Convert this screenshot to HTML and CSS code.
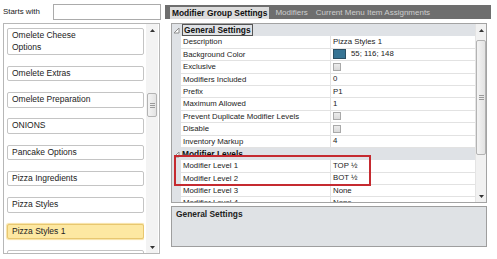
FILE: index.html
```html
<!DOCTYPE html>
<html>
<head>
<meta charset="utf-8">
<link rel="stylesheet" href="styles.css">
</head>
<body>
<div class="app">
  <aside class="left">
    <div class="search">
      <span class="search-label">Starts with</span>
      <input class="search-input" type="text">
    </div>
    <div class="list">
      <div class="items">
        <div class="item">Omelete Cheese<br>Options</div>
        <div class="item">Omelete Extras</div>
        <div class="item">Omelete Preparation</div>
        <div class="item">ONIONS</div>
        <div class="item">Pancake Options</div>
        <div class="item">Pizza Ingredients</div>
        <div class="item">Pizza Styles</div>
        <div class="item selected">Pizza Styles 1</div>
        <div class="item">&nbsp;</div>
      </div>
      <div class="lscroll">
        <div class="arrow"><svg width="5" height="3" viewBox="0 0 5 3"><polygon points="0,3 5,3 2.5,0" fill="#333"/></svg></div>
        <div class="lthumb"><span class="grip"></span></div>
        <div class="arrow down"><svg width="5" height="3" viewBox="0 0 5 3"><polygon points="0,0 5,0 2.5,3" fill="#333"/></svg></div>
      </div>
    </div>
  </aside>
  <main class="right">
    <div class="tabs">
      <span class="tab active">Modifier Group Settings</span>
      <span class="tab">Modifiers</span>
      <span class="tab">Current Menu Item Assignments</span>
    </div>
    <div class="grid">
      <div class="rows">
        <div class="row cat"><span class="gut"><svg width="7" height="7" viewBox="0 0 7 7"><polygon points="6,1 6,6 1,6" fill="#fff" stroke="#8c8c8c" stroke-width="1"/></svg></span><span class="cat-label"><span class="focus">General Settings</span></span></div>
        <div class="row"><span class="gut"></span><span class="name">Description</span><span class="val">Pizza Styles 1</span></div>
        <div class="row"><span class="gut"></span><span class="name">Background Color</span><span class="val"><span class="swatch"></span>55; 116; 148</span></div>
        <div class="row"><span class="gut"></span><span class="name">Exclusive</span><span class="val"><span class="check"></span></span></div>
        <div class="row"><span class="gut"></span><span class="name">Modifiers Included</span><span class="val">0</span></div>
        <div class="row"><span class="gut"></span><span class="name">Prefix</span><span class="val">P1</span></div>
        <div class="row"><span class="gut"></span><span class="name">Maximum Allowed</span><span class="val">1</span></div>
        <div class="row"><span class="gut"></span><span class="name">Prevent Duplicate Modifier Levels</span><span class="val"><span class="check"></span></span></div>
        <div class="row"><span class="gut"></span><span class="name">Disable</span><span class="val"><span class="check"></span></span></div>
        <div class="row"><span class="gut"></span><span class="name">Inventory Markup</span><span class="val">4</span></div>
        <div class="row cat"><span class="gut"><svg width="7" height="7" viewBox="0 0 7 7"><polygon points="6,1 6,6 1,6" fill="#fff" stroke="#8c8c8c" stroke-width="1"/></svg></span><span class="cat-label">Modifier Levels</span></div>
        <div class="row"><span class="gut"></span><span class="name">Modifier Level 1</span><span class="val">TOP ½</span></div>
        <div class="row"><span class="gut"></span><span class="name">Modifier Level 2</span><span class="val">BOT ½</span></div>
        <div class="row"><span class="gut"></span><span class="name">Modifier Level 3</span><span class="val">None</span></div>
        <div class="row"><span class="gut"></span><span class="name">Modifier Level 4</span><span class="val">None</span></div>
      </div>
      <div class="gscroll">
        <div class="arrow"><svg width="5" height="3" viewBox="0 0 5 3"><polygon points="0,3 5,3 2.5,0" fill="#333"/></svg></div>
        <div class="gthumb"><span class="grip"></span></div>
        <div class="arrow down"><svg width="5" height="3" viewBox="0 0 5 3"><polygon points="0,0 5,0 2.5,3" fill="#333"/></svg></div>
      </div>
      <div class="callout"></div>
    </div>
    <div class="desc">General Settings</div>
  </main>
</div>
</body>
</html>
```
FILE: styles.css
```css
* { box-sizing: border-box; }
html, body { margin: 0; padding: 0; background: #fff; }
body {
  font-family: "Liberation Sans", Arial, sans-serif;
  color: #222;
  width: 497px;
  height: 259px;
  overflow: hidden;
}
.app { display: flex; align-items: flex-start; }

/* left panel */
.left { width: 158px; margin-left: 3px; flex: none; }
.search { display: flex; align-items: center; height: 23px; }
.search-label { font-size: 7.9px; color: #222; }
.search-input {
  margin: 0 0 0 auto;
  width: 108px;
  height: 16px;
  border: 1px solid #ababab;
  padding: 0;
  background: #fff;
  outline: none;
}
.list {
  width: 157px;
  height: 231px;
  border: 1px solid #b7b7b7;
  display: flex;
}
.items {
  width: 140px;
  padding: 4px 0 0 3px;
  display: flex;
  flex-direction: column;
  gap: 10.8px;
  overflow: hidden;
  flex: none;
}
.item {
  width: 137px;
  flex: none;
  border: 1px solid #c4c4c4;
  border-radius: 2px;
  padding: 1px 4px;
  font-size: 8.5px;
  line-height: 11.5px;
  background: #fff;
  color: #222;
}
.item.selected {
  background: #fde8a2;
  border-color: #e8c770;
  box-shadow: 0 0 1px 1px #f7e2a4;
}
.lscroll {
  width: 12px;
  margin-left: 2px;
  background: #f3f3f3;
  display: flex;
  flex-direction: column;
  align-items: center;
}
.arrow {
  height: 12px;
  width: 100%;
  display: flex;
  align-items: center;
  justify-content: center;
  flex: none;
}
.arrow.down { margin-top: auto; }
.lthumb {
  margin-top: 57px;
  width: 10px;
  height: 24px;
  border: 1px solid #b3b3b3;
  border-radius: 2px;
  background: linear-gradient(to right, #f4f4f4, #e3e3e3);
  display: flex;
  align-items: center;
  justify-content: center;
}
.grip {
  width: 5px;
  height: 5px;
  border-top: 1px solid #9a9a9a;
  border-bottom: 1px solid #9a9a9a;
  position: relative;
}
.grip::after {
  content: "";
  position: absolute;
  left: 0; right: 0; top: 1px;
  border-top: 1px solid #9a9a9a;
}

/* right panel */
.right { width: 326px; margin-left: 4px; flex: none; }
.tabs {
  margin-top: 5px;
  height: 14px;
  background: #6e6e6e;
  display: flex;
  align-items: flex-end;
  padding-left: 5px;
  font-size: 8px;
}
.tab {
  color: #cdcdcd;
  padding: 0 4px;
  height: 12px;
  line-height: 12px;
  white-space: nowrap;
}
.tab.active {
  background: #dcdcdc;
  color: #111;
  font-weight: bold;
  font-size: 8.4px;
  padding: 0 2px;
  margin-right: 2px;
}
.grid {
  position: relative;
  margin: 4px 0 0 6px;
  width: 316px;
  height: 180px;
  border: 1px solid #a3a3a3;
  display: flex;
}
.rows { width: 303px; flex: none; overflow: hidden; background: #fff; }
.row {
  display: flex;
  height: 12.4px;
  font-size: 7.8px;
  line-height: 12px;
  white-space: nowrap;
}
.gut {
  width: 9px;
  flex: none;
  background: #dfe2e6;
  display: flex;
  align-items: center;
  justify-content: center;
}
.name {
  width: 149px;
  flex: none;
  padding-left: 2px;
  border-bottom: 1px solid #e2e2e2;
  overflow: hidden;
}
.val {
  flex: 1;
  padding-left: 2px;
  border-left: 1px solid #e2e2e2;
  border-bottom: 1px solid #e2e2e2;
  display: flex;
  align-items: center;
}
.row.cat { background: #dfe2e6; }
.cat-label {
  flex: 1;
  padding-left: 1px;
  font-weight: bold;
  font-size: 8.4px;
  color: #111;
}
.focus {
  border: 1px solid #555;
  padding: 0 1px;
  line-height: 10px;
  display: inline-block;
}
.swatch {
  width: 13px;
  height: 10px;
  background: rgb(55, 116, 148);
  border: 1px solid #2b4f63;
  margin-right: 5px;
}
.check {
  width: 8px;
  height: 8px;
  border: 1px solid #a9a9a9;
  background: linear-gradient(#ececec, #dadada);
}
.gscroll {
  width: 11px;
  flex: none;
  background: #f1f1f1;
  border-left: 1px solid #e4e4e4;
  display: flex;
  flex-direction: column;
  align-items: center;
}
.gthumb {
  margin-top: 4px;
  width: 10px;
  height: 115px;
  border: 1px solid #b3b3b3;
  border-radius: 2px;
  background: linear-gradient(to right, #f4f4f4, #e3e3e3);
  display: flex;
  align-items: center;
  justify-content: center;
}
.callout {
  position: absolute;
  left: 2px;
  top: 131px;
  width: 197px;
  height: 31px;
  border: 2px solid #c52a30;
}
.desc {
  margin: 3px 0 0 6px;
  width: 316px;
  height: 41px;
  border: 1px solid #9e9e9e;
  background: #dfe2e5;
  padding: 2px 4px;
  font-weight: bold;
  font-size: 8.4px;
  color: #222;
}
```
